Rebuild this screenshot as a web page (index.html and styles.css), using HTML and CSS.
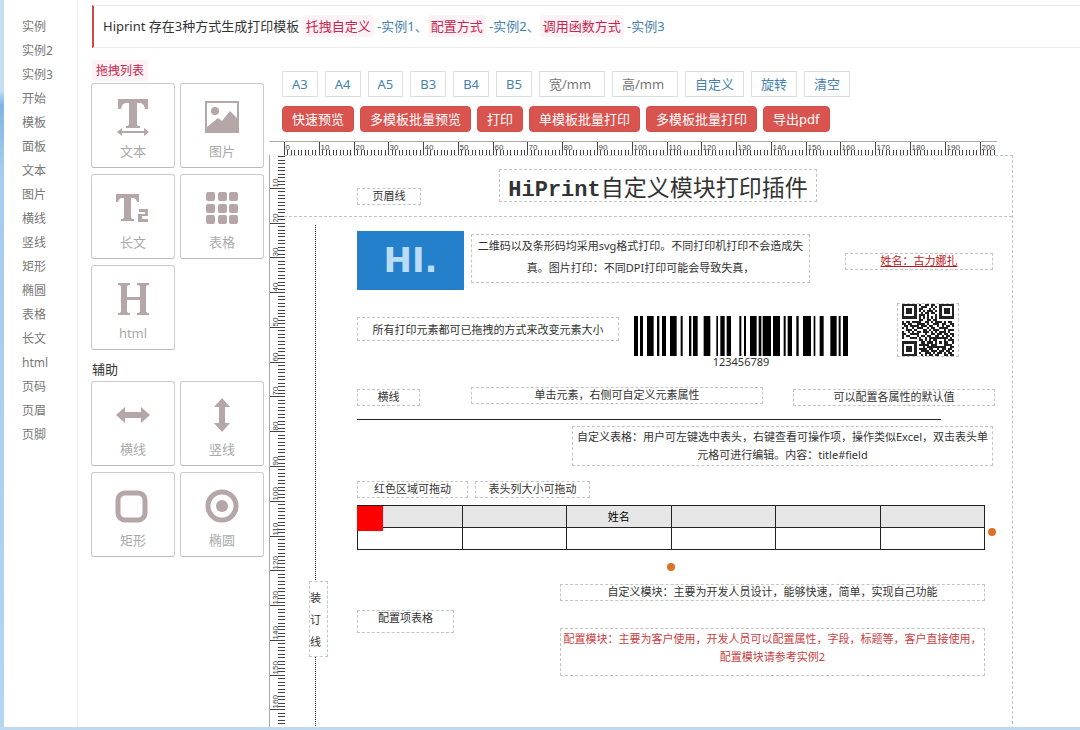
FILE: index.html
```html
<!DOCTYPE html>
<html lang="zh-CN">
<head>
<meta charset="utf-8">
<title>Hiprint</title>
<link rel="stylesheet" href="styles.css">
</head>
<body>
<div class="app">
  <nav class="menu">
    <a href="#">实例</a><a href="#">实例2</a><a href="#">实例3</a><a href="#">开始</a><a href="#">模板</a><a href="#">面板</a><a href="#">文本</a><a href="#">图片</a><a href="#">横线</a><a href="#">竖线</a><a href="#">矩形</a><a href="#">椭圆</a><a href="#">表格</a><a href="#">长文</a><a href="#">html</a><a href="#">页码</a><a href="#">页眉</a><a href="#">页脚</a>
  </nav>
  <main class="main">
    <blockquote class="intro">Hiprint 存在3种方式生成打印模板 <code>托拽自定义</code> <a href="#">-实例1、</a><code>配置方式</code> <a href="#">-实例2、</a><code>调用函数方式</code> <a href="#">-实例3</a></blockquote>
    <div class="work">
      <aside class="palette">
        <h2 class="heading"><code>拖拽列表</code></h2>
        <div class="cards">
          <button class="card"><svg viewBox="0 0 36 36"><path d="M3 0H33V10H30Q29 4 25 4H22V25Q22 27 25 27V29H11V27Q14 27 14 25V4H11Q7 4 6 10H3Z"/><path d="M2 33l5-4v3h22v-3l5 4-5 4v-3H7v3z"/></svg>文本</button>
          <button class="card"><svg viewBox="0 0 36 36"><path fill-rule="evenodd" d="M1 2H35V34H1ZM3 4V28L14 19L18 22L26 12L33 19V4Z"/><circle cx="11" cy="12" r="4"/></svg>图片</button>
          <button class="card"><svg viewBox="0 0 36 36"><path d="M1 4H24V12H22Q21 8 18 8H16V27Q16 29 19 29V31H6V29Q9 29 9 27V8H7Q4 8 3 12H1Z"/><path d="M24 19H33V26H27V29H33V32H23V24H30V22H24Z"/></svg>长文</button>
          <button class="card"><svg viewBox="0 0 36 36"><rect x="2" y="2" width="9" height="9" rx="2"/><rect x="14" y="2" width="9" height="9" rx="2"/><rect x="25" y="2" width="9" height="9" rx="2"/><rect x="2" y="14" width="9" height="9" rx="2"/><rect x="14" y="14" width="9" height="9" rx="2"/><rect x="25" y="14" width="9" height="9" rx="2"/><rect x="2" y="25" width="9" height="9" rx="2"/><rect x="14" y="25" width="9" height="9" rx="2"/><rect x="25" y="25" width="9" height="9" rx="2"/></svg>表格</button>
          <button class="card"><svg viewBox="0 0 36 36"><path d="M3 2H15V4Q12 4 12 6V16H25V6Q25 4 22 4V2H34V4Q31 4 31 6V30Q31 32 34 32V34H22V32Q25 32 25 30V19H12V30Q12 32 15 32V34H3V32Q6 32 6 30V6Q6 4 3 4Z"/></svg>html</button>
        </div>
        <h2 class="heading">辅助</h2>
        <div class="cards">
          <button class="card"><svg viewBox="0 0 36 36"><path d="M1 18l9-8v5h16v-5l9 8-9 8v-5H10v5z"/></svg>横线</button>
          <button class="card"><svg viewBox="0 0 36 36"><path d="M18 1l8 9h-5v16h5l-8 9-8-9h5V10h-5z"/></svg>竖线</button>
          <button class="card"><svg viewBox="0 0 36 36"><rect class="ring" x="3" y="5" width="27" height="27" rx="7"/></svg>矩形</button>
          <button class="card"><svg viewBox="0 0 36 36"><circle class="ring" cx="18" cy="18" r="14"/><circle cx="18" cy="18" r="6"/></svg>椭圆</button>
        </div>
      </aside>
      <section class="designer">
        <div class="bar sizes">
          <button>A3</button><button>A4</button><button>A5</button><button>B3</button><button>B4</button><button>B5</button><input aria-label="宽/mm" placeholder="宽/mm"><input aria-label="高/mm" placeholder="高/mm"><button>自定义</button><button>旋转</button><button>清空</button>
        </div>
        <div class="bar actions">
          <button>快速预览</button><button>多模板批量预览</button><button>打印</button><button>单模板批量打印</button><button>多模板批量打印</button><button>导出pdf</button>
        </div>
        <div class="stage">
          <svg class="ruler-x" id="rulerX"></svg>
          <svg class="ruler-y" id="rulerY"></svg>
          <div class="paper">
            <div class="header-line"></div>
            <div class="bind-line"></div>
            <div class="item header-label">页眉线</div>
            <div class="item title"><span>HiPrint</span>自定义模块打印插件</div>
            <div class="item picture">HI.</div>
            <div class="item note-svg">二维码以及条形码均采用svg格式打印。不同打印机打印不会造成失<br>真。图片打印：不同DPI打印可能会导致失真，</div>
            <div class="item name">姓名：古力娜扎</div>
            <div class="item note-drag">所有打印元素都可已拖拽的方式来改变元素大小</div>
            <div class="barcode"><svg id="barcode" viewBox="0 0 642 120" preserveAspectRatio="none"></svg>123456789</div>
            <div class="item qr"><svg id="qr" viewBox="0 0 25 25"></svg></div>
            <div class="item line-label">横线</div>
            <div class="item note-click">单击元素，右侧可自定义元素属性</div>
            <div class="item note-default">可以配置各属性的默认值</div>
            <div class="rule"></div>
            <div class="item note-table">自定义表格：用户可左键选中表头，右键查看可操作项，操作类似Excel，双击表头单<br>元格可进行编辑。内容：title#field</div>
            <div class="item note-red">红色区域可拖动</div>
            <div class="item note-head">表头列大小可拖动</div>
            <table class="grid">
              <thead><tr><th></th><th></th><th>姓名</th><th></th><th></th><th></th></tr></thead>
              <tbody><tr><td></td><td></td><td></td><td></td><td></td><td></td></tr></tbody>
            </table>
            <div class="grip"></div>
            <div class="dot dot-right"></div>
            <div class="dot dot-bottom"></div>
            <div class="item note-module">自定义模块：主要为开发人员设计，能够快速，简单，实现自己功能</div>
            <div class="item config-label">配置项表格</div>
            <div class="item note-config">配置模块：主要为客户使用，开发人员可以配置属性，字段，标题等，客户直接使用，<br>配置模块请参考实例2</div>
            <div class="item bind-label">装<br>订<br>线</div>
          </div>
        </div>
      </section>
    </div>
  </main>
</div>
<script src="main.js"></script>
</body>
</html>
```
FILE: styles.css
```css
* { box-sizing: border-box; }
body {
  margin: 0;
  color: #333;
  background: #fff;
  font: 13px/20px "Noto Sans", "Noto Sans CJK SC", sans-serif;
}
a { text-decoration: none; }
button, input { font: inherit; margin: 0; }
h2, blockquote { margin: 0; font-weight: 400; }
code { font-family: "Noto Sans", "Noto Sans CJK SC", sans-serif; color: #c7254e; background: #fdf2f5; border-radius: 4px; padding: 2px 4px; }

.app {
  display: flex;
  height: 100vh;
  overflow: hidden;
  border-bottom: 3px solid #bfdaf0;
}
.app::before {
  content: "";
  flex: none;
  width: 4px;
  background: linear-gradient(#c4def4, #c4def4 90px, #7fb5e4 105px, #a5cbed 170px, #b4d5f2);
}
.menu {
  flex: none;
  display: flex;
  flex-direction: column;
  width: 74px;
  padding: 15px 0 0 18px;
  border-right: 1px solid #eee;
}
.menu a { color: #777; font-size: 12px; line-height: 24px; }

.main { flex: 1; min-width: 0; display: flex; flex-direction: column; padding: 5px 0 0 13px; }
.intro {
  margin-left: 1px;
  padding: 10px 9px 11px;
  line-height: 20px;
  border: 1px solid #eee;
  border-left: 2px solid #c9494c;
  border-right: 0;
  white-space: nowrap;
}
.intro a { color: #4682b0; }
.intro code { padding: 2px 3px; }
.work { flex: 1; min-height: 0; display: flex; gap: 5px; }

.palette { flex: none; width: 173px; padding-top: 12px; }
.heading { font-size: 13px; line-height: 20px; padding: 0 1px; }
.heading code { font-size: 12px; }
.cards { display: grid; grid-template-columns: 1fr 1fr; gap: 6px 5px; margin: 2px 0 9px; }
.card {
  height: 85px;
  padding: 8px 0 0;
  display: flex;
  flex-direction: column;
  align-items: center;
  justify-content: center;
  gap: 6px;
  color: #aaa;
  background: #fff;
  border: 1px solid #ccc;
  border-bottom-color: #bbb;
  border-radius: 3px;
}
.card svg { width: 36px; height: 36px; fill: #b5a6a7; overflow: visible; }
.card .ring { fill: none; stroke: #b5a6a7; stroke-width: 5; }

.designer { flex: 1; min-width: 0; display: flex; flex-direction: column; padding-top: 23px; }
.bar { display: flex; gap: 6px; margin: 0 0 9px 13px; }
.bar button, .bar input { height: 26px; padding: 0 9px; line-height: 20px; white-space: nowrap; }
.sizes { gap: 7px; }
.sizes button, .sizes input { background: #fff; border: 1px solid #ddd; color: #4682b0; }
.sizes input { width: 66px; color: #777; }
.sizes input::placeholder { color: #777; }
.actions button { color: #fff; background: #d9534f; border: 1px solid #d0504c; border-radius: 4px; }

.stage {
  flex: 1;
  min-height: 0;
  display: grid;
  grid-template: 14px 1fr / 15px 1fr;
  overflow: hidden;
}
.ruler-x { grid-area: 1 / 1 / 2 / 3; width: 728px; height: 14px; border-top: 1px solid #aaa; }
.ruler-y { grid-area: 2 / 1; width: 15px; height: 1030px; border-left: 1px solid #aaa; overflow: visible; }
.ruler-x path, .ruler-y path { stroke: #444; fill: none; }
.ruler-x text, .ruler-y text { font: 8px "Liberation Sans", sans-serif; fill: #444; }

.paper {
  grid-area: 2 / 2;
  position: relative;
  width: 729px;
  height: 1030px;
  border: 1px dashed #c4c4c4;
  border-left: 0;
  color: #333;
  font-size: 11px;
  line-height: 16px;
}
.paper > * { position: absolute; }
.item { border: 1px dashed #c4c4c4; text-align: center; line-height: 14px; white-space: nowrap; }
.header-line { left: 0; right: 0; top: 60px; border-top: 1px dashed #c4c4c4; }
.bind-line { left: 31px; top: 69px; bottom: 0; border-left: 1px dotted #222; }
.header-label { left: 73px; top: 32px; width: 64px; height: 17px; }
.title { left: 215px; top: 13px; width: 318px; height: 33px; font: 400 23px/32px "Noto Sans CJK SC", sans-serif; }
.title span { font: bold 22px/32px "Liberation Mono", monospace; }
.picture { left: 73px; top: 75px; width: 107px; height: 59px; border: 0; background: #2480cb; color: #b9dcf8; font: bold 34px/59px "DejaVu Sans", sans-serif; }
.note-svg { left: 187px; top: 78px; width: 339px; height: 49px; line-height: 22px; }
.name { left: 561px; top: 97px; width: 148px; height: 17px; color: #c01820; text-decoration: underline; }
.note-drag { left: 73px; top: 161px; width: 262px; height: 24px; line-height: 24px; }
.barcode { left: 350px; top: 160px; width: 214px; text-align: center; line-height: 12px; }
.barcode svg { display: block; width: 100%; height: 40px; }
.qr { left: 613px; top: 147px; width: 62px; height: 54px; }
.qr svg { display: block; width: 52px; height: 52px; margin: 0 auto; }
.line-label { left: 73px; top: 233px; width: 63px; height: 17px; }
.note-click { left: 187px; top: 231px; width: 292px; height: 17px; }
.note-default { left: 509px; top: 233px; width: 202px; height: 17px; }
.rule { left: 73px; top: 263px; width: 584px; border-top: 1px solid #222; }
.note-table { left: 288px; top: 270px; width: 421px; height: 40px; padding-top: 1px; line-height: 18px; }
.note-red { left: 73px; top: 325px; width: 111px; height: 17px; }
.note-head { left: 191px; top: 325px; width: 115px; height: 17px; }
.grid { left: 73px; top: 349px; width: 628px; border-collapse: collapse; table-layout: fixed; }
.grid th, .grid td { height: 22px; padding: 0; border: 1px solid #222; line-height: 20px; font-weight: 400; color: #000; }
.grid th { background: #e7e6e6; }
.grip { left: 73px; top: 350px; width: 26px; height: 25px; background: #f00; }
.dot { width: 8px; height: 8px; border-radius: 50%; background: #dd7127; }
.dot-right { left: 704px; top: 372px; }
.dot-bottom { left: 383px; top: 407px; }
.note-module { left: 276px; top: 428px; width: 425px; height: 17px; }
.config-label { left: 73px; top: 454px; width: 97px; height: 23px; }
.note-config { left: 276px; top: 472px; width: 425px; height: 48px; padding-top: 1px; line-height: 18px; color: #c9413f; }
.bind-label { left: 25px; top: 425px; width: 19px; height: 76px; padding-top: 5px; line-height: 22px; text-align: left; background: #fff; }
```
FILE: main.js
```js
const NS = 'http://www.w3.org/2000/svg';
const MM = 3.478;

function add(svg, tag, attrs, text) {
  const el = document.createElementNS(NS, tag);
  for (const key in attrs) el.setAttribute(key, attrs[key]);
  if (text) el.textContent = text;
  svg.appendChild(el);
}

function drawRuler(svg, vertical, count, origin) {
  let d = '';
  for (let i = 0; i <= count; i++) {
    const p = Math.round(origin + i * MM) + 0.5;
    const start = i % 10 === 0 ? 0 : 8;
    if (p < 0) continue;
    d += vertical ? `M${start} ${p}H15` : `M${p} ${start}V14`;
    if (i % 10 === 0) {
      if (vertical) {
        if (i > 0) add(svg, 'text', { transform: `translate(8 ${p - 1}) rotate(-90)` }, String(i));
      } else {
        add(svg, 'text', { x: p + 1, y: 8 }, String(i));
      }
    }
  }
  add(svg, 'path', { d });
}
drawRuler(document.getElementById('rulerX'), false, 205, 15);
drawRuler(document.getElementById('rulerY'), true, 165, -2);

const bars = [[42,54],[60,69],[81,101],[111,118],[126,138],[150,170],[182,188],[207,214],[219,233],[251,271],[289,294],[301,314],[320,333],[358,364],[372,378],[390,410],[416,424],[428,453],[459,480],[491,497],[503,516],[529,536],[549,573],[581,586],[599,611],[631,650],[656,662],[669,684]];
add(document.getElementById('barcode'), 'path', {
  d: bars.map(([a, b]) => `M${a - 42} 0H${b - 42}V120H${a - 42}Z`).join('')
});

const modules = [
  '1111111010011011001111111',
  '1000001001110010101000001',
  '1011101011000101001011101',
  '1011101010101110101011101',
  '1011101001011011001011101',
  '1000001011101000101000001',
  '1111111010101010101111111',
  '0000000011001101100000000',
  '1011011110011010111010110',
  '1101100111101001110110011',
  '0110111101110110010101101',
  '1010010111001011001111000',
  '0011101000110101110010111',
  '1001010110111010101110100',
  '1100111100010011011011011',
  '1011000101101100110101101',
  '1000111010010111111111010',
  '0000000011010101100010111',
  '1111111001101110101011001',
  '1000001011111011100011110',
  '1011101000101111111110011',
  '1011101011110110010110110',
  '1011101001111011101101101',
  '1000001010011101011010110',
  '1111111001010110110011011'
];
add(document.getElementById('qr'), 'path', {
  'shape-rendering': 'crispEdges',
  fill: '#222',
  d: modules.map((row, y) => [...row].map((m, x) => m === '1' ? `M${x} ${y}h1v1h-1z` : '').join('')).join('')
});
```
